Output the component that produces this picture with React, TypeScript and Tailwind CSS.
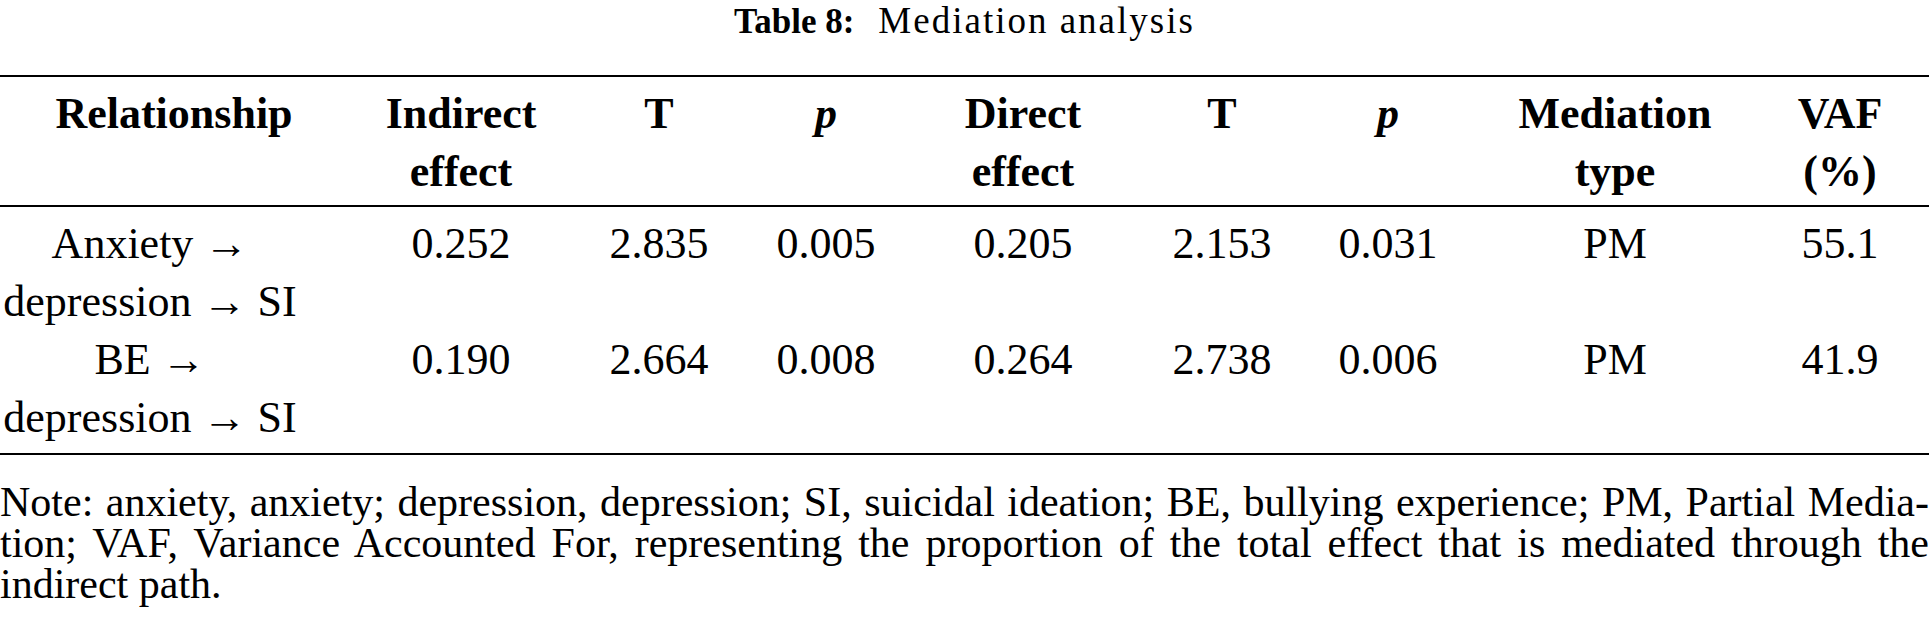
const cols = "grid grid-cols-[300px_322px_74px_260px_134px_264px_68px_386px_64px]";

const rows = [
  { rel: ["Anxiety →", "depression → SI"], vals: ["0.252", "2.835", "0.005", "0.205", "2.153", "0.031", "PM", "55.1"] },
  { rel: ["BE →", "depression → SI"], vals: ["0.190", "2.664", "0.008", "0.264", "2.738", "0.006", "PM", "41.9"] },
];

function Cell({ children, className = "" }: { children: React.ReactNode; className?: string }) {
  return <div className={`flex justify-center whitespace-nowrap ${className}`}>{children}</div>;
}

function Head({ lines, italic }: { lines: string[]; italic?: boolean }) {
  return (
    <Cell>
      <div className={`text-center ${italic ? "italic" : ""}`}>
        {lines.map((l) => (
          <div key={l}>{l}</div>
        ))}
      </div>
    </Cell>
  );
}

export default function App() {
  return (
    <div className="w-[1929px] h-[630px] bg-white text-black font-['Liberation_Serif',serif] overflow-hidden">
      {/* Caption */}
      <div className="text-center text-[37px] leading-[41px] mb-[33px]">
        <span className="font-bold text-[35px]">Table 8:</span>
        <span className="ml-[24px] tracking-[2px]">Mediation analysis</span>
      </div>

      {/* Header */}
      <div className={`${cols} border-t-2 border-b-2 border-black pt-2 pb-1 text-[44px] leading-[58px] font-bold`}>
        <Cell className="pl-[48px]">Relationship</Cell>
        <Head lines={["Indirect", "effect"]} />
        <Head lines={["T"]} />
        <Head lines={["p"]} italic />
        <Head lines={["Direct", "effect"]} />
        <Head lines={["T"]} />
        <Head lines={["p"]} italic />
        <Head lines={["Mediation", "type"]} />
        <Head lines={["VAF", "(%)"]} />
      </div>

      {/* Body */}
      <div className="border-b-2 border-black pt-2 pb-[6px] text-[44px] leading-[58px]">
        {rows.map((r) => (
          <div key={r.rel[0]} className={cols}>
            <Cell>
              <div className="text-center">
                <div>{r.rel[0]}</div>
                <div>{r.rel[1]}</div>
              </div>
            </Cell>
            {r.vals.map((v, i) => (
              <Cell key={i}>{v}</Cell>
            ))}
          </div>
        ))}
      </div>

      {/* Note */}
      <div className="mt-[27px] text-[42px] leading-[41px]">
        <div className="text-justify [text-align-last:justify]">
          Note: anxiety, anxiety; depression, depression; SI, suicidal ideation; BE, bullying experience; PM, Partial Media-
        </div>
        <div className="text-justify [text-align-last:justify]">
          tion; VAF, Variance Accounted For, representing the proportion of the total effect that is mediated through the
        </div>
        <div>indirect path.</div>
      </div>
    </div>
  );
}
